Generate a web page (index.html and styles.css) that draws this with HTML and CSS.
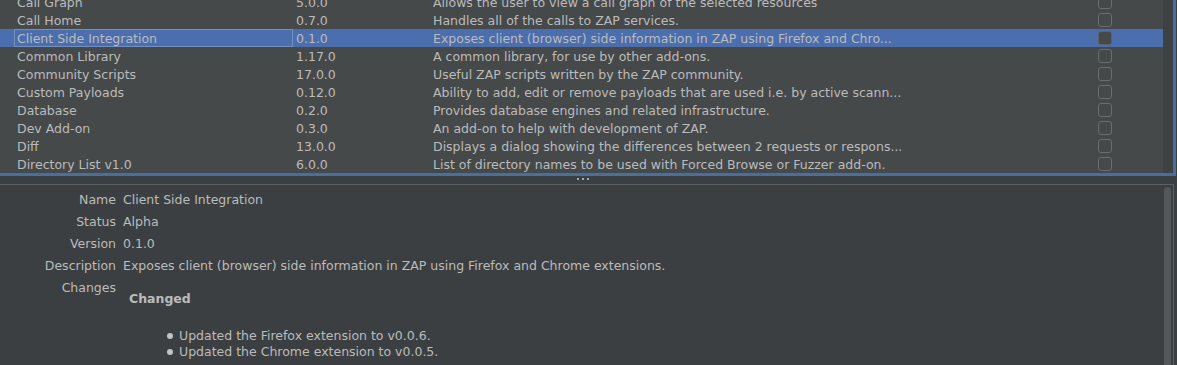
FILE: index.html
```html
<!DOCTYPE html>
<html>
<head>
<meta charset="utf-8">
<link rel="stylesheet" href="styles.css">
</head>
<body>
<div class="app">
  <div class="table-pane">
    <div class="viewport">
      <div class="rows">
        <div class="row"><span></span><span class="cell">Call Graph</span><span class="cell">5.0.0</span><span class="cell">Allows the user to view a call graph of the selected resources</span><span class="cell-check"><i class="cb"></i></span></div>
        <div class="row"><span></span><span class="cell">Call Home</span><span class="cell">0.7.0</span><span class="cell">Handles all of the calls to ZAP services.</span><span class="cell-check"><i class="cb"></i></span></div>
        <div class="row selected"><span></span><span class="cell focus">Client Side Integration</span><span class="cell">0.1.0</span><span class="cell">Exposes client (browser) side information in ZAP using Firefox and Chro...</span><span class="cell-check"><i class="cb"></i></span></div>
        <div class="row"><span></span><span class="cell">Common Library</span><span class="cell">1.17.0</span><span class="cell">A common library, for use by other add-ons.</span><span class="cell-check"><i class="cb"></i></span></div>
        <div class="row"><span></span><span class="cell">Community Scripts</span><span class="cell">17.0.0</span><span class="cell">Useful ZAP scripts written by the ZAP community.</span><span class="cell-check"><i class="cb"></i></span></div>
        <div class="row"><span></span><span class="cell">Custom Payloads</span><span class="cell">0.12.0</span><span class="cell">Ability to add, edit or remove payloads that are used i.e. by active scann...</span><span class="cell-check"><i class="cb"></i></span></div>
        <div class="row"><span></span><span class="cell">Database</span><span class="cell">0.2.0</span><span class="cell">Provides database engines and related infrastructure.</span><span class="cell-check"><i class="cb"></i></span></div>
        <div class="row"><span></span><span class="cell">Dev Add-on</span><span class="cell">0.3.0</span><span class="cell">An add-on to help with development of ZAP.</span><span class="cell-check"><i class="cb"></i></span></div>
        <div class="row"><span></span><span class="cell">Diff</span><span class="cell">13.0.0</span><span class="cell">Displays a dialog showing the differences between 2 requests or respons...</span><span class="cell-check"><i class="cb"></i></span></div>
        <div class="row"><span></span><span class="cell">Directory List v1.0</span><span class="cell">6.0.0</span><span class="cell">List of directory names to be used with Forced Browse or Fuzzer add-on.</span><span class="cell-check"><i class="cb"></i></span></div>
      </div>
    </div>
    <div class="vscroll"></div>
  </div>
  <div class="divider"><span class="grip"><i></i><i></i><i></i></span></div>
  <div class="detail">
    <div class="detail-body">
      <div class="field"><span class="label">Name</span><span class="value">Client Side Integration</span></div>
      <div class="field"><span class="label">Status</span><span class="value">Alpha</span></div>
      <div class="field"><span class="label">Version</span><span class="value">0.1.0</span></div>
      <div class="field"><span class="label">Description</span><span class="value">Exposes client (browser) side information in ZAP using Firefox and Chrome extensions.</span></div>
      <div class="field"><span class="label">Changes</span>
        <div class="value changes">
          <h3 class="changes-title">Changed</h3>
          <ul class="changes-list">
            <li>Updated the Firefox extension to v0.0.6.</li>
            <li>Updated the Chrome extension to v0.0.5.</li>
          </ul>
        </div>
      </div>
    </div>
    <div class="dscroll"><div class="thumb"></div></div>
  </div>
</div>
</body>
</html>
```
FILE: styles.css
```css
* { box-sizing: border-box; }
html, body {
  margin: 0;
  padding: 0;
  background: #3c3f41;
  width: 1177px;
  height: 365px;
  overflow: hidden;
}
.app {
  width: 1177px;
  height: 365px;
  font-family: "DejaVu Sans", sans-serif;
  font-size: 12.5px;
  color: #bbbbbb;
  display: flex;
  flex-direction: column;
  overflow: hidden;
}
.table-pane {
  width: 1176px;
  height: 176px;
  flex: none;
  display: flex;
  border-right: 3px solid #45709f;
  border-bottom: 3px solid #45709f;
  background: #45494a;
}
.viewport {
  flex: 1;
  overflow: hidden;
}
.rows {
  margin-top: -7px;
}
.row {
  display: grid;
  grid-template-columns: 14px 279px 137px 668px 65px;
  height: 18px;
  align-items: center;
}
.row.selected {
  background: #4b6eaf;
}
.cell {
  padding-left: 3px;
  padding-top: 2px;
  white-space: nowrap;
  overflow: hidden;
  line-height: 16px;
  height: 18px;
}
.cell.focus {
  border: 1px solid #7390c4;
  padding-left: 2px;
  padding-top: 1px;
  line-height: 16px;
}
.cell-check {
  display: flex;
  align-items: center;
  height: 18px;
}
.cb {
  display: block;
  width: 14px;
  height: 14px;
  border: 1px solid #6b6d6e;
  border-radius: 3px;
}
.row.selected .cb {
  background: #45494a;
  border-color: #5e6062;
}
.vscroll {
  width: 10px;
  background: #3f4244;
}
.divider {
  height: 8px;
  flex: none;
  display: flex;
  align-items: center;
  padding-left: 577px;
}
.grip {
  display: flex;
  gap: 3px;
  margin-top: -2px;
}
.grip i {
  display: block;
  width: 2px;
  height: 2px;
  background: #a8a8a8;
}
.detail {
  flex: 1;
  min-height: 0;
  overflow: hidden;
  width: 1174px;
  border-top: 1px solid #5e6062;
  border-right: 1px solid #5e6062;
  display: flex;
}
.detail-body {
  flex: 1;
  padding-top: 4px;
}
.field {
  display: flex;
  gap: 7px;
  line-height: 22px;
}
.label {
  width: 116px;
  text-align: right;
  flex: none;
}
.value {
  white-space: nowrap;
}
.changes {
  padding-left: 6px;
  padding-top: 14px;
}
.changes-title {
  margin: 0;
  font-size: 12.5px;
  font-weight: bold;
  line-height: 16px;
}
.changes-list {
  list-style: none;
  margin: 21px 0 0 38px;
  padding: 0;
}
.changes-list li {
  line-height: 16px;
  display: flex;
  align-items: center;
  gap: 6px;
}
.changes-list li::before {
  content: "";
  width: 6px;
  height: 6px;
  border-radius: 50%;
  background: #c4c4c4;
  flex: none;
}
.dscroll {
  width: 9px;
  padding-top: 2px;
  padding-right: 2px;
  display: flex;
}
.thumb {
  width: 7px;
  flex: 1;
  border-radius: 4px 4px 0 0;
  background: #55585a;
}
```
